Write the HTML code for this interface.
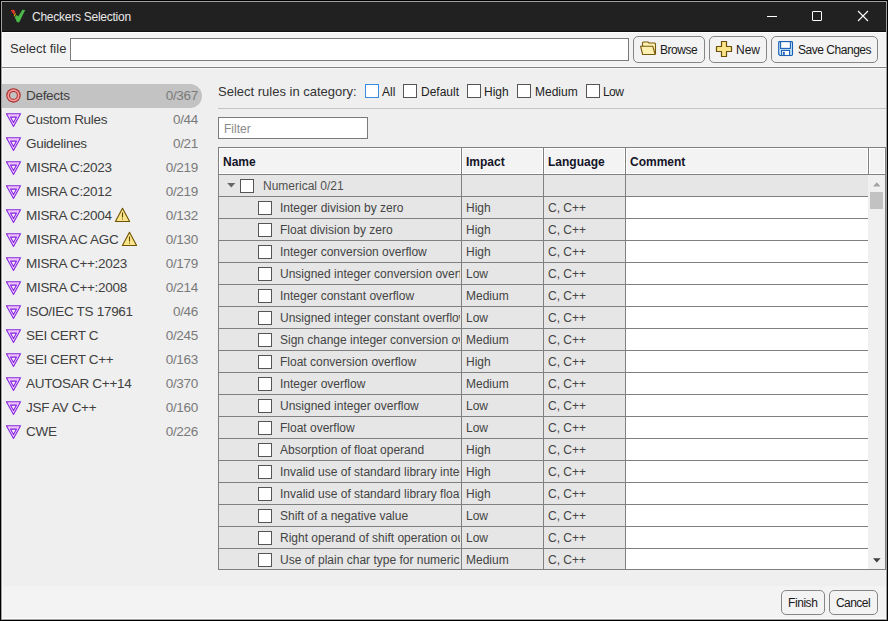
<!DOCTYPE html>
<html><head><meta charset="utf-8">
<style>
*{margin:0;padding:0;box-sizing:border-box}
html,body{width:888px;height:621px;overflow:hidden;background:#000}
body{position:relative;font-family:"Liberation Sans",sans-serif;font-size:12px;color:#222}
.a{position:absolute}
.btn{background:#f3f3f3;border:1px solid #868686;border-radius:5px}
.sb{left:26px;font-size:13.5px;letter-spacing:-0.3px;color:#404040}
.sc{right:690px;font-size:13.5px;letter-spacing:-0.3px;color:#7a7a7a}
.cb{position:absolute;width:14px;height:14px;background:#fff;border:1px solid #555}
.th{font-weight:bold;color:#141428}
.td{color:#444}
.t{position:absolute;white-space:nowrap;line-height:1}
</style></head><body>
<!-- frame -->
<div class="a" style="left:1px;top:1px;width:886px;height:619px;background:#a0a0a0"></div>
<!-- title bar -->
<div class="a" style="left:2px;top:2px;width:884px;height:30px;background:#212121"></div>
<div class="a" style="left:2px;top:31px;width:884px;height:1px;background:#101010"></div>
<svg class="a" style="left:9px;top:8px" width="18" height="16" viewBox="0 0 18 16">
<path d="M1.8 2 L4.8 1.8 L6.3 3.4 L5.7 5.3 L4.6 6.2 L2.8 3.9 Z" fill="#d8382e"/>
<path d="M6.2 4.8 Q7.2 5.3 6.6 6.6 L5.8 8.6 Q4.7 8.7 4.8 7.5 Z" fill="#f2ad00"/>
<path d="M5.8 9.2 L7.6 7 L9.2 8.6 L13.4 1.8 L16.2 2 L10.3 14.2 L8 14.2 Z" fill="#4db749"/>
</svg>
<div class="t" style="left:32px;top:11px;font-size:12px;letter-spacing:-0.25px;color:#e8e8e8">Checkers Selection</div>
<div class="a" style="left:767px;top:16px;width:10px;height:1px;background:#fff"></div>
<div class="a" style="left:812px;top:11px;width:10px;height:10px;border:1px solid #fff;border-radius:1px"></div>
<svg class="a" style="left:857px;top:10px" width="12" height="12" viewBox="0 0 12 12"><path d="M1 1L11 11M11 1L1 11" stroke="#fff" stroke-width="1.1"/></svg>

<!-- top panel -->
<div class="a" style="left:2px;top:32px;width:884px;height:35px;background:#f3f3f3;border-top:1px solid #fff;border-left:1px solid #fff;border-bottom:1px solid #fbfbfb"></div>
<div class="a" style="left:2px;top:67px;width:884px;height:1px;background:#808080"></div>
<div class="t" style="left:10px;top:42px;font-size:13px;color:#333">Select file</div>
<div class="a" style="left:70px;top:38px;width:559px;height:23px;background:#fff;border:1px solid #7a7a7a"></div>


<!-- buttons -->
<div class="a btn" style="left:633px;top:36px;width:72px;height:27px"></div>
<svg class="a" style="left:637px;top:38px" width="22" height="20" viewBox="0 0 22 20">
<path d="M5.5 12 V5 Q5.5 4 6.5 4 H11 L12 5 H17.5 Q18.5 5 18.5 6 V16" fill="#fdf0b0" stroke="#77580f" stroke-width="1.1"/>
<path d="M3.6 8.3 H15.8 L18.2 16.5 H5.6 Z" fill="#fdf0b0" stroke="#77580f" stroke-width="1.1" stroke-linejoin="round"/>
</svg>
<div class="t" style="left:660px;top:44px;font-size:12px;letter-spacing:-0.45px;color:#1a1a1a">Browse</div>
<div class="a btn" style="left:709px;top:36px;width:58px;height:27px"></div>
<svg class="a" style="left:713px;top:38px" width="22" height="22" viewBox="0 0 22 22">
<path d="M8.5 3.5 H13.5 V8.5 H18.5 V13.5 H13.5 V18.5 H8.5 V13.5 H3.5 V8.5 H8.5 Z" fill="#fde68a" stroke="#6b4e0b" stroke-width="1.2" stroke-linejoin="round"/>
</svg>
<div class="t" style="left:736px;top:44px;font-size:12px;color:#1a1a1a">New</div>
<div class="a btn" style="left:771px;top:36px;width:107px;height:27px"></div>
<svg class="a" style="left:775px;top:38px" width="22" height="22" viewBox="0 0 22 22">
<path d="M3.7 4.5 Q3.7 3.6 4.6 3.6 H16.6 Q17.5 3.6 17.5 4.5 V16.6 Q17.5 17.5 16.6 17.5 H5 L3.7 16.2 Z" fill="#c5e3fb" stroke="#1a5fb4" stroke-width="1.1"/>
<rect x="5.6" y="3.6" width="9.8" height="6.8" fill="#fff" stroke="#1a5fb4" stroke-width="1.1"/>
<rect x="6.6" y="12.4" width="8" height="5.1" fill="#fff" stroke="#1a5fb4" stroke-width="1.1"/>
<rect x="8" y="13.8" width="1.8" height="3" fill="#1a5fb4"/>
</svg>
<div class="t" style="left:798px;top:44px;font-size:12px;letter-spacing:-0.47px;color:#1a1a1a">Save Changes</div>

<!-- main panel -->
<div class="a" style="left:2px;top:68px;width:884px;height:518px;background:#efefef;border-top:1px solid #f9f9f9;border-left:1px solid #f8f8f8"></div>
<!-- bottom panel -->
<div class="a" style="left:2px;top:586px;width:884px;height:33px;background:#f3f3f3;border-left:1px solid #f8f8f8;border-bottom:1px solid #fff"></div>


<!-- categories -->
<div class="t" style="left:218px;top:85px;font-size:13px;color:#333">Select rules in category:</div>
<div class="a cb" style="left:365px;top:84px;border-color:#3c8ce0"></div>
<div class="t" style="left:382px;top:86px">All</div>
<div class="a cb" style="left:403px;top:84px"></div>
<div class="t" style="left:421px;top:86px">Default</div>
<div class="a cb" style="left:467px;top:84px"></div>
<div class="t" style="left:484px;top:86px">High</div>
<div class="a cb" style="left:517px;top:84px"></div>
<div class="t" style="left:535px;top:86px">Medium</div>
<div class="a cb" style="left:586px;top:84px"></div>
<div class="t" style="left:603px;top:86px;letter-spacing:-0.6px">Low</div>
<div class="a" style="left:218px;top:108px;width:668px;height:1px;background:#c4c4c4"></div>
<div class="a" style="left:218px;top:117px;width:150px;height:22px;background:#fff;border:1px solid #7a7a7a"></div>
<div class="t" style="left:224px;top:123px;color:#8a8a8a">Filter</div>

<!-- table -->
<div class="a" style="left:218px;top:147px;width:668px;height:423px;border:1px solid #808080;background:#e6e6e6"></div>
<div class="a" style="left:219px;top:148px;width:666px;height:26px;background:#f3f3f3;border-bottom:1px solid #808080"></div>
<div class="a" style="left:219px;top:148px;width:242px;height:26px;border-top:1px solid #fff;border-left:1px solid #fff;border-right:1px solid #fff;border-bottom:1px solid #fff"></div>
<div class="a" style="left:462px;top:148px;width:81px;height:26px;border-top:1px solid #fff;border-left:1px solid #fff;border-right:1px solid #fff;border-bottom:1px solid #fff"></div>
<div class="a" style="left:544px;top:148px;width:81px;height:26px;border-top:1px solid #fff;border-left:1px solid #fff;border-right:1px solid #fff;border-bottom:1px solid #fff"></div>
<div class="a" style="left:626px;top:148px;width:242px;height:26px;border-top:1px solid #fff;border-left:1px solid #fff;border-right:1px solid #fff;border-bottom:1px solid #fff"></div>
<div class="a" style="left:869px;top:148px;width:16px;height:26px;border-top:1px solid #fff;border-left:1px solid #fff;border-right:1px solid #fff;border-bottom:1px solid #fff"></div>
<div class="a" style="left:461px;top:148px;width:1px;height:26px;background:#808080"></div>
<div class="a" style="left:543px;top:148px;width:1px;height:26px;background:#808080"></div>
<div class="a" style="left:625px;top:148px;width:1px;height:26px;background:#808080"></div>
<div class="a" style="left:868px;top:148px;width:1px;height:26px;background:#808080"></div>
<div class="a" style="left:219px;top:174px;width:666px;height:1px;background:#808080"></div>
<div class="t th" style="left:223px;top:156px">Name</div>
<div class="t th" style="left:466px;top:156px">Impact</div>
<div class="t th" style="left:548px;top:156px">Language</div>
<div class="t th" style="left:630px;top:156px">Comment</div>
<div class="a" style="left:626px;top:197px;width:242px;height:372px;background:#fff"></div>
<div class="a" style="left:219px;top:196px;width:649px;height:1px;background:#808080"></div>
<div class="a" style="left:219px;top:218px;width:649px;height:1px;background:#808080"></div>
<div class="a" style="left:219px;top:240px;width:649px;height:1px;background:#808080"></div>
<div class="a" style="left:219px;top:262px;width:649px;height:1px;background:#808080"></div>
<div class="a" style="left:219px;top:284px;width:649px;height:1px;background:#808080"></div>
<div class="a" style="left:219px;top:306px;width:649px;height:1px;background:#808080"></div>
<div class="a" style="left:219px;top:328px;width:649px;height:1px;background:#808080"></div>
<div class="a" style="left:219px;top:350px;width:649px;height:1px;background:#808080"></div>
<div class="a" style="left:219px;top:372px;width:649px;height:1px;background:#808080"></div>
<div class="a" style="left:219px;top:394px;width:649px;height:1px;background:#808080"></div>
<div class="a" style="left:219px;top:416px;width:649px;height:1px;background:#808080"></div>
<div class="a" style="left:219px;top:438px;width:649px;height:1px;background:#808080"></div>
<div class="a" style="left:219px;top:460px;width:649px;height:1px;background:#808080"></div>
<div class="a" style="left:219px;top:482px;width:649px;height:1px;background:#808080"></div>
<div class="a" style="left:219px;top:504px;width:649px;height:1px;background:#808080"></div>
<div class="a" style="left:219px;top:526px;width:649px;height:1px;background:#808080"></div>
<div class="a" style="left:219px;top:548px;width:649px;height:1px;background:#808080"></div>
<div class="a" style="left:461px;top:175px;width:1px;height:394px;background:#808080"></div>
<div class="a" style="left:543px;top:175px;width:1px;height:394px;background:#808080"></div>
<div class="a" style="left:625px;top:175px;width:1px;height:394px;background:#808080"></div>
<svg class="a" style="left:227px;top:183px" width="9" height="5" viewBox="0 0 9 5"><path d="M0.2 0H8.3L4.25 4.4Z" fill="#666"/></svg>
<div class="cb" style="left:240px;top:179px"></div>
<div class="t td" style="left:263px;top:180px;color:#505050">Numerical 0/21</div>
<div class="cb" style="left:258px;top:201px"></div>
<div class="a" style="left:280px;top:197px;width:180px;height:21px;overflow:hidden"><div class="t td" style="left:0;top:5px">Integer division by zero</div></div>
<div class="t td" style="left:466px;top:202px">High</div>
<div class="t td" style="left:548px;top:202px">C, C++</div>
<div class="cb" style="left:258px;top:223px"></div>
<div class="a" style="left:280px;top:219px;width:180px;height:21px;overflow:hidden"><div class="t td" style="left:0;top:5px">Float division by zero</div></div>
<div class="t td" style="left:466px;top:224px">High</div>
<div class="t td" style="left:548px;top:224px">C, C++</div>
<div class="cb" style="left:258px;top:245px"></div>
<div class="a" style="left:280px;top:241px;width:180px;height:21px;overflow:hidden"><div class="t td" style="left:0;top:5px">Integer conversion overflow</div></div>
<div class="t td" style="left:466px;top:246px">High</div>
<div class="t td" style="left:548px;top:246px">C, C++</div>
<div class="cb" style="left:258px;top:267px"></div>
<div class="a" style="left:280px;top:263px;width:180px;height:21px;overflow:hidden"><div class="t td" style="left:0;top:5px">Unsigned integer conversion overflow</div></div>
<div class="t td" style="left:466px;top:268px">Low</div>
<div class="t td" style="left:548px;top:268px">C, C++</div>
<div class="cb" style="left:258px;top:289px"></div>
<div class="a" style="left:280px;top:285px;width:180px;height:21px;overflow:hidden"><div class="t td" style="left:0;top:5px">Integer constant overflow</div></div>
<div class="t td" style="left:466px;top:290px">Medium</div>
<div class="t td" style="left:548px;top:290px">C, C++</div>
<div class="cb" style="left:258px;top:311px"></div>
<div class="a" style="left:280px;top:307px;width:180px;height:21px;overflow:hidden"><div class="t td" style="left:0;top:5px">Unsigned integer constant overflow</div></div>
<div class="t td" style="left:466px;top:312px">Low</div>
<div class="t td" style="left:548px;top:312px">C, C++</div>
<div class="cb" style="left:258px;top:333px"></div>
<div class="a" style="left:280px;top:329px;width:180px;height:21px;overflow:hidden"><div class="t td" style="left:0;top:5px">Sign change integer conversion overflow</div></div>
<div class="t td" style="left:466px;top:334px">Medium</div>
<div class="t td" style="left:548px;top:334px">C, C++</div>
<div class="cb" style="left:258px;top:355px"></div>
<div class="a" style="left:280px;top:351px;width:180px;height:21px;overflow:hidden"><div class="t td" style="left:0;top:5px">Float conversion overflow</div></div>
<div class="t td" style="left:466px;top:356px">High</div>
<div class="t td" style="left:548px;top:356px">C, C++</div>
<div class="cb" style="left:258px;top:377px"></div>
<div class="a" style="left:280px;top:373px;width:180px;height:21px;overflow:hidden"><div class="t td" style="left:0;top:5px">Integer overflow</div></div>
<div class="t td" style="left:466px;top:378px">Medium</div>
<div class="t td" style="left:548px;top:378px">C, C++</div>
<div class="cb" style="left:258px;top:399px"></div>
<div class="a" style="left:280px;top:395px;width:180px;height:21px;overflow:hidden"><div class="t td" style="left:0;top:5px">Unsigned integer overflow</div></div>
<div class="t td" style="left:466px;top:400px">Low</div>
<div class="t td" style="left:548px;top:400px">C, C++</div>
<div class="cb" style="left:258px;top:421px"></div>
<div class="a" style="left:280px;top:417px;width:180px;height:21px;overflow:hidden"><div class="t td" style="left:0;top:5px">Float overflow</div></div>
<div class="t td" style="left:466px;top:422px">Low</div>
<div class="t td" style="left:548px;top:422px">C, C++</div>
<div class="cb" style="left:258px;top:443px"></div>
<div class="a" style="left:280px;top:439px;width:180px;height:21px;overflow:hidden"><div class="t td" style="left:0;top:5px">Absorption of float operand</div></div>
<div class="t td" style="left:466px;top:444px">High</div>
<div class="t td" style="left:548px;top:444px">C, C++</div>
<div class="cb" style="left:258px;top:465px"></div>
<div class="a" style="left:280px;top:461px;width:180px;height:21px;overflow:hidden"><div class="t td" style="left:0;top:5px">Invalid use of standard library integer routine</div></div>
<div class="t td" style="left:466px;top:466px">High</div>
<div class="t td" style="left:548px;top:466px">C, C++</div>
<div class="cb" style="left:258px;top:487px"></div>
<div class="a" style="left:280px;top:483px;width:180px;height:21px;overflow:hidden"><div class="t td" style="left:0;top:5px">Invalid use of standard library floating point routine</div></div>
<div class="t td" style="left:466px;top:488px">High</div>
<div class="t td" style="left:548px;top:488px">C, C++</div>
<div class="cb" style="left:258px;top:509px"></div>
<div class="a" style="left:280px;top:505px;width:180px;height:21px;overflow:hidden"><div class="t td" style="left:0;top:5px">Shift of a negative value</div></div>
<div class="t td" style="left:466px;top:510px">Low</div>
<div class="t td" style="left:548px;top:510px">C, C++</div>
<div class="cb" style="left:258px;top:531px"></div>
<div class="a" style="left:280px;top:527px;width:180px;height:21px;overflow:hidden"><div class="t td" style="left:0;top:5px">Right operand of shift operation outside allowed bounds</div></div>
<div class="t td" style="left:466px;top:532px">Low</div>
<div class="t td" style="left:548px;top:532px">C, C++</div>
<div class="cb" style="left:258px;top:553px"></div>
<div class="a" style="left:280px;top:549px;width:180px;height:21px;overflow:hidden"><div class="t td" style="left:0;top:5px">Use of plain char type for numerical value</div></div>
<div class="t td" style="left:466px;top:554px">Medium</div>
<div class="t td" style="left:548px;top:554px">C, C++</div>
<div class="a" style="left:868px;top:175px;width:17px;height:394px;background:#f0f0f0"></div>
<svg class="a" style="left:873px;top:182px" width="8" height="5" viewBox="0 0 8 5"><path d="M0 4.6H7.6L3.8 0.3Z" fill="#a3a3a3"/></svg>
<div class="a" style="left:870px;top:192px;width:13px;height:17px;background:#c2c2c2"></div>
<svg class="a" style="left:873px;top:558px" width="8" height="5" viewBox="0 0 8 5"><path d="M0 0.3H7.6L3.8 4.6Z" fill="#404040"/></svg>
<div class="a btn" style="left:781px;top:590px;width:44px;height:25px"></div>
<div class="t" style="left:788px;top:597px;font-size:12px;letter-spacing:-0.43px;color:#1a1a1a">Finish</div>
<div class="a btn" style="left:829px;top:590px;width:49px;height:25px"></div>
<div class="t" style="left:836px;top:597px;font-size:12px;letter-spacing:-0.55px;color:#1a1a1a">Cancel</div>
<!-- sidebar -->
<div class="a" style="left:2px;top:84px;width:200px;height:24px;background:#c3c3c3;border-radius:0 12px 12px 0"></div>
<svg class="a" style="left:3px;top:85px" width="22" height="22" viewBox="0 0 22 22"><circle cx="10.46" cy="10.46" r="7.2" fill="#a52a2a"/><circle cx="10.46" cy="10.46" r="6.1" fill="#ff9c9c"/><circle cx="10.46" cy="10.46" r="4.4" fill="#a52a2a"/><circle cx="10.46" cy="10.46" r="3.4" fill="#c3c3c3"/></svg>
<div class="t sb" style="top:89px">Defects</div>
<div class="t sc" style="top:89px">0/367</div>
<svg class="a" style="left:3px;top:110px" width="22" height="20" viewBox="0 0 22 20"><path d="M3.4 3.8 H17.6 L10.5 16.6 Z" fill="#efc4ff" stroke="#8424e0" stroke-width="1.05" stroke-linejoin="round"/><path d="M7.5 7.1 H13.5 L10.5 12.6 Z" fill="#f6eef8" stroke="#8424e0" stroke-width="1.05" stroke-linejoin="round"/></svg>
<div class="t sb" style="top:113px">Custom Rules</div>
<div class="t sc" style="top:113px">0/44</div>
<svg class="a" style="left:3px;top:134px" width="22" height="20" viewBox="0 0 22 20"><path d="M3.4 3.8 H17.6 L10.5 16.6 Z" fill="#efc4ff" stroke="#8424e0" stroke-width="1.05" stroke-linejoin="round"/><path d="M7.5 7.1 H13.5 L10.5 12.6 Z" fill="#f6eef8" stroke="#8424e0" stroke-width="1.05" stroke-linejoin="round"/></svg>
<div class="t sb" style="top:137px">Guidelines</div>
<div class="t sc" style="top:137px">0/21</div>
<svg class="a" style="left:3px;top:158px" width="22" height="20" viewBox="0 0 22 20"><path d="M3.4 3.8 H17.6 L10.5 16.6 Z" fill="#efc4ff" stroke="#8424e0" stroke-width="1.05" stroke-linejoin="round"/><path d="M7.5 7.1 H13.5 L10.5 12.6 Z" fill="#f6eef8" stroke="#8424e0" stroke-width="1.05" stroke-linejoin="round"/></svg>
<div class="t sb" style="top:161px">MISRA C:2023</div>
<div class="t sc" style="top:161px">0/219</div>
<svg class="a" style="left:3px;top:182px" width="22" height="20" viewBox="0 0 22 20"><path d="M3.4 3.8 H17.6 L10.5 16.6 Z" fill="#efc4ff" stroke="#8424e0" stroke-width="1.05" stroke-linejoin="round"/><path d="M7.5 7.1 H13.5 L10.5 12.6 Z" fill="#f6eef8" stroke="#8424e0" stroke-width="1.05" stroke-linejoin="round"/></svg>
<div class="t sb" style="top:185px">MISRA C:2012</div>
<div class="t sc" style="top:185px">0/219</div>
<svg class="a" style="left:3px;top:206px" width="22" height="20" viewBox="0 0 22 20"><path d="M3.4 3.8 H17.6 L10.5 16.6 Z" fill="#efc4ff" stroke="#8424e0" stroke-width="1.05" stroke-linejoin="round"/><path d="M7.5 7.1 H13.5 L10.5 12.6 Z" fill="#f6eef8" stroke="#8424e0" stroke-width="1.05" stroke-linejoin="round"/></svg>
<div class="t sb" style="top:209px">MISRA C:2004</div>
<div class="t sc" style="top:209px">0/132</div>
<svg class="a" style="left:114px;top:207px" width="17" height="16" viewBox="0 0 17 16"><path d="M8.5 1.3 L15.6 14.5 H1.4 Z" fill="#fbe58a" stroke="#6e5200" stroke-width="1.1" stroke-linejoin="round"/><path d="M8.5 5.5 V10.5" stroke="#5a4400" stroke-width="1.1"/><rect x="8" y="11.6" width="1" height="1" fill="#5a4400"/></svg>
<svg class="a" style="left:3px;top:230px" width="22" height="20" viewBox="0 0 22 20"><path d="M3.4 3.8 H17.6 L10.5 16.6 Z" fill="#efc4ff" stroke="#8424e0" stroke-width="1.05" stroke-linejoin="round"/><path d="M7.5 7.1 H13.5 L10.5 12.6 Z" fill="#f6eef8" stroke="#8424e0" stroke-width="1.05" stroke-linejoin="round"/></svg>
<div class="t sb" style="top:233px">MISRA AC AGC</div>
<div class="t sc" style="top:233px">0/130</div>
<svg class="a" style="left:121px;top:231px" width="17" height="16" viewBox="0 0 17 16"><path d="M8.5 1.3 L15.6 14.5 H1.4 Z" fill="#fbe58a" stroke="#6e5200" stroke-width="1.1" stroke-linejoin="round"/><path d="M8.5 5.5 V10.5" stroke="#5a4400" stroke-width="1.1"/><rect x="8" y="11.6" width="1" height="1" fill="#5a4400"/></svg>
<svg class="a" style="left:3px;top:254px" width="22" height="20" viewBox="0 0 22 20"><path d="M3.4 3.8 H17.6 L10.5 16.6 Z" fill="#efc4ff" stroke="#8424e0" stroke-width="1.05" stroke-linejoin="round"/><path d="M7.5 7.1 H13.5 L10.5 12.6 Z" fill="#f6eef8" stroke="#8424e0" stroke-width="1.05" stroke-linejoin="round"/></svg>
<div class="t sb" style="top:257px">MISRA C++:2023</div>
<div class="t sc" style="top:257px">0/179</div>
<svg class="a" style="left:3px;top:278px" width="22" height="20" viewBox="0 0 22 20"><path d="M3.4 3.8 H17.6 L10.5 16.6 Z" fill="#efc4ff" stroke="#8424e0" stroke-width="1.05" stroke-linejoin="round"/><path d="M7.5 7.1 H13.5 L10.5 12.6 Z" fill="#f6eef8" stroke="#8424e0" stroke-width="1.05" stroke-linejoin="round"/></svg>
<div class="t sb" style="top:281px">MISRA C++:2008</div>
<div class="t sc" style="top:281px">0/214</div>
<svg class="a" style="left:3px;top:302px" width="22" height="20" viewBox="0 0 22 20"><path d="M3.4 3.8 H17.6 L10.5 16.6 Z" fill="#efc4ff" stroke="#8424e0" stroke-width="1.05" stroke-linejoin="round"/><path d="M7.5 7.1 H13.5 L10.5 12.6 Z" fill="#f6eef8" stroke="#8424e0" stroke-width="1.05" stroke-linejoin="round"/></svg>
<div class="t sb" style="top:305px">ISO/IEC TS 17961</div>
<div class="t sc" style="top:305px">0/46</div>
<svg class="a" style="left:3px;top:326px" width="22" height="20" viewBox="0 0 22 20"><path d="M3.4 3.8 H17.6 L10.5 16.6 Z" fill="#efc4ff" stroke="#8424e0" stroke-width="1.05" stroke-linejoin="round"/><path d="M7.5 7.1 H13.5 L10.5 12.6 Z" fill="#f6eef8" stroke="#8424e0" stroke-width="1.05" stroke-linejoin="round"/></svg>
<div class="t sb" style="top:329px">SEI CERT C</div>
<div class="t sc" style="top:329px">0/245</div>
<svg class="a" style="left:3px;top:350px" width="22" height="20" viewBox="0 0 22 20"><path d="M3.4 3.8 H17.6 L10.5 16.6 Z" fill="#efc4ff" stroke="#8424e0" stroke-width="1.05" stroke-linejoin="round"/><path d="M7.5 7.1 H13.5 L10.5 12.6 Z" fill="#f6eef8" stroke="#8424e0" stroke-width="1.05" stroke-linejoin="round"/></svg>
<div class="t sb" style="top:353px">SEI CERT C++</div>
<div class="t sc" style="top:353px">0/163</div>
<svg class="a" style="left:3px;top:374px" width="22" height="20" viewBox="0 0 22 20"><path d="M3.4 3.8 H17.6 L10.5 16.6 Z" fill="#efc4ff" stroke="#8424e0" stroke-width="1.05" stroke-linejoin="round"/><path d="M7.5 7.1 H13.5 L10.5 12.6 Z" fill="#f6eef8" stroke="#8424e0" stroke-width="1.05" stroke-linejoin="round"/></svg>
<div class="t sb" style="top:377px">AUTOSAR C++14</div>
<div class="t sc" style="top:377px">0/370</div>
<svg class="a" style="left:3px;top:398px" width="22" height="20" viewBox="0 0 22 20"><path d="M3.4 3.8 H17.6 L10.5 16.6 Z" fill="#efc4ff" stroke="#8424e0" stroke-width="1.05" stroke-linejoin="round"/><path d="M7.5 7.1 H13.5 L10.5 12.6 Z" fill="#f6eef8" stroke="#8424e0" stroke-width="1.05" stroke-linejoin="round"/></svg>
<div class="t sb" style="top:401px">JSF AV C++</div>
<div class="t sc" style="top:401px">0/160</div>
<svg class="a" style="left:3px;top:422px" width="22" height="20" viewBox="0 0 22 20"><path d="M3.4 3.8 H17.6 L10.5 16.6 Z" fill="#efc4ff" stroke="#8424e0" stroke-width="1.05" stroke-linejoin="round"/><path d="M7.5 7.1 H13.5 L10.5 12.6 Z" fill="#f6eef8" stroke="#8424e0" stroke-width="1.05" stroke-linejoin="round"/></svg>
<div class="t sb" style="top:425px">CWE</div>
<div class="t sc" style="top:425px">0/226</div>
</body></html>
